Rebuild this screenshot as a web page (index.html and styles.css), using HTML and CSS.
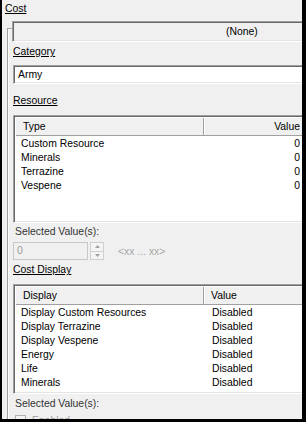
FILE: index.html
```html
<!DOCTYPE html>
<html lang="en">
<head>
  <meta charset="UTF-8" />
  <title>Cost</title>
  <link rel="stylesheet" href="styles.css">
</head>
<body>
  <div class="frame">
    <div class="title">Cost</div>

    <div class="group">
      <div class="none-bar sunken">(None)</div>

      <!-- Category -->
      <div class="label">Category</div>
      <div class="field sunken">Army</div>

      <!-- Resource -->
      <div class="label gap">Resource</div>
      <div class="list list-res sunken">
        <div class="head">
          <div class="hcell c1">Type</div>
          <div class="hcell c2 right">Value</div>
        </div>
        <div class="rows">
          <div class="row"><span class="c1">Custom Resource</span><span class="c2 right">0</span></div>
          <div class="row"><span class="c1">Minerals</span><span class="c2 right">0</span></div>
          <div class="row"><span class="c1">Terrazine</span><span class="c2 right">0</span></div>
          <div class="row"><span class="c1">Vespene</span><span class="c2 right">0</span></div>
        </div>
      </div>

      <div class="sel">Selected Value(s):</div>
      <div class="spin-row">
        <div class="num">0</div>
        <div class="spin">
          <div class="sbtn"><svg width="5" height="3" viewBox="0 0 5 3"><path d="M2.5 0 L5 3 L0 3 Z" fill="#a0a0a0"/></svg></div>
          <div class="sbtn"><svg width="5" height="3" viewBox="0 0 5 3"><path d="M0 0 L5 0 L2.5 3 Z" fill="#a0a0a0"/></svg></div>
        </div>
        <div class="range">&lt;xx ... xx&gt;</div>
      </div>

      <!-- Cost Display -->
      <div class="label cd">Cost Display</div>
      <div class="list list-disp sunken">
        <div class="head">
          <div class="hcell c1">Display</div>
          <div class="hcell c2">Value</div>
        </div>
        <div class="rows">
          <div class="row"><span class="c1">Display Custom Resources</span><span class="c2">Disabled</span></div>
          <div class="row"><span class="c1">Display Terrazine</span><span class="c2">Disabled</span></div>
          <div class="row"><span class="c1">Display Vespene</span><span class="c2">Disabled</span></div>
          <div class="row"><span class="c1">Energy</span><span class="c2">Disabled</span></div>
          <div class="row"><span class="c1">Life</span><span class="c2">Disabled</span></div>
          <div class="row"><span class="c1">Minerals</span><span class="c2">Disabled</span></div>
        </div>
      </div>

      <div class="sel sel2">Selected Value(s):</div>
      <div class="chk-row"><span class="box"></span><span class="chk-txt">Enabled</span></div>
    </div>
  </div>
</body>
</html>
```

FILE: styles.css
```css
html,body{margin:0;padding:0;background:#000}
body{font-family:"Liberation Sans",Arial,sans-serif;font-size:10.4px;color:#000}
.frame{width:306px;height:422px;box-sizing:border-box;background:#f0f0f0;border-left:2px solid #000;border-right:4px solid #000;border-bottom:3px solid #000;overflow:hidden}
.title{margin:2px 0 0 3px;line-height:14px;text-decoration:underline}

.group{width:330px;margin:12px 0 0 5px;border-top:1px solid #a0a0a0;border-left:1px solid #a0a0a0;box-shadow:inset 1px 1px 0 #fff;padding-left:4px}
.sunken{border:1px solid;border-color:#a0a0a0 #fff #fff #a0a0a0;box-shadow:inset 1px 1px 0 #696969,inset -1px -1px 0 #e3e3e3;box-sizing:border-box}

.none-bar{margin-top:-8px;width:297px;height:21px;line-height:19px;padding-left:213px;background:#f0f0f0}
.label{margin:3px 0 0 1px;line-height:14px;text-decoration:underline}
.label.gap{margin-top:10px}
.label.cd{margin-top:3px}
.field{margin:6px 0 0 1px;width:296px;height:19px;line-height:17px;padding-left:4px;background:#fff}

.list{margin:7px 0 0 1px;width:296px;background:#fff;padding:2px}
.list-res{height:108px}
.list-disp{height:110px}
.head{display:flex;height:18px;line-height:17px;background:#f0f0f0;border-bottom:1px solid #a0a0a0;box-sizing:border-box}
.hcell.c1{width:188px;padding-left:7px;box-sizing:border-box;border-right:1px solid #a0a0a0;box-shadow:1px 0 0 #fff}
.hcell.c2{flex:1;padding:0 6px 0 7px}
.rows{padding-top:1px}
.row{display:flex;height:14px;line-height:14px}
.row .c1{width:189px;padding-left:5px;box-sizing:border-box}
.row .c2{flex:1;padding:0 6px 0 7px}
.right{text-align:right}

.sel{margin:2px 0 0 3px;line-height:14px;color:#333}
.sel2{margin-top:3px}
.spin-row{display:flex;align-items:center;margin:3px 0 0 1px;height:18px}
.num{width:75px;height:18px;box-sizing:border-box;border:1px solid #c8c8c8;background:#f0f0f0;color:#9a9a9a;line-height:16px;padding-left:3px}
.spin{display:flex;flex-direction:column;margin-left:2px;width:14px;height:18px}
.sbtn{flex:1;display:flex;align-items:center;justify-content:center;border:1px solid #d0d0d0;background:#f4f4f4}
.sbtn+.sbtn{border-top:none}
.range{margin-left:14px;color:#a8a8a8}

.chk-row{display:flex;align-items:center;margin:3px 0 0 3px;height:13px}
.box{width:11px;height:11px;border:1px solid #b0b0b0;background:#f4f4f4;box-sizing:border-box}
.chk-txt{margin-left:6px;color:#a0a0a0}
```
